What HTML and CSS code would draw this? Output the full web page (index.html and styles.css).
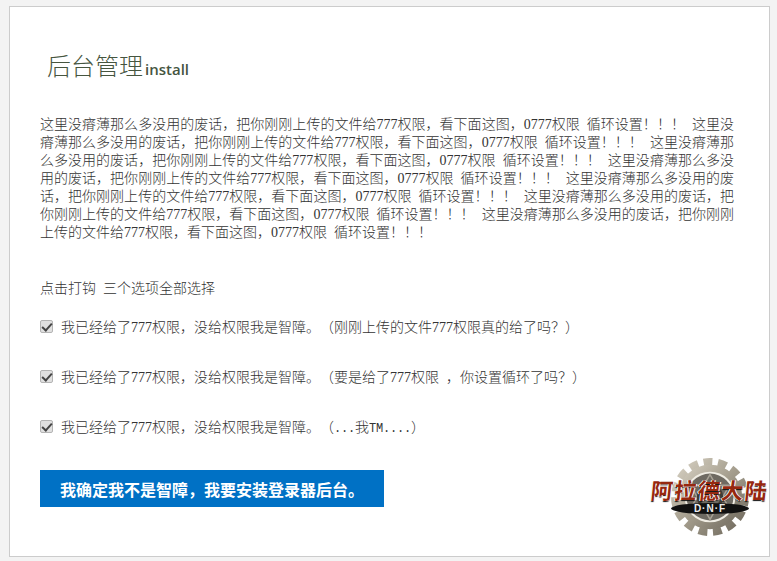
FILE: index.html
```html
<!DOCTYPE html>
<html lang="zh-CN">
<head>
    <meta charset="UTF-8">
    <title>后台管理 install</title>
    <link rel="stylesheet" href="styles.css">
</head>
<body>
    <div class="panel">
        <h1 class="title">后台管理<small>install</small></h1>

        <p class="notice">这里没瘠薄那么多没用的废话，把你刚刚上传的文件给777权限，看下面这图，0777权限 循环设置！！！ 这里没瘠薄那么多没用的废话，把你刚刚上传的文件给777权限，看下面这图，0777权限 循环设置！！！ 这里没瘠薄那么多没用的废话，把你刚刚上传的文件给777权限，看下面这图，0777权限 循环设置！！！ 这里没瘠薄那么多没用的废话，把你刚刚上传的文件给777权限，看下面这图，0777权限 循环设置！！！ 这里没瘠薄那么多没用的废话，把你刚刚上传的文件给777权限，看下面这图，0777权限 循环设置！！！ 这里没瘠薄那么多没用的废话，把你刚刚上传的文件给777权限，看下面这图，0777权限 循环设置！！！ 这里没瘠薄那么多没用的废话，把你刚刚上传的文件给777权限，看下面这图，0777权限 循环设置！！！</p>

        <p class="hint">点击打钩 三个选项全部选择</p>

        <div class="checks">
            <label class="check"><input type="checkbox" checked><span>我已经给了777权限，没给权限我是智障。（刚刚上传的文件777权限真的给了吗？）</span></label>
            <label class="check"><input type="checkbox" checked><span>我已经给了777权限，没给权限我是智障。（要是给了777权限 ，你设置循环了吗？）</span></label>
            <label class="check"><input type="checkbox" checked><span>我已经给了777权限，没给权限我是智障。（<span class="latin">...</span>我<span class="latin">TM....</span>）</span></label>
        </div>

        <div class="bottom">
            <button class="submit" type="button">我确定我不是智障，我要安装登录器后台。</button>
            <div class="logo">
                <svg class="gear" viewBox="0 0 80 80" width="78" height="78">
                    <defs>
                        <linearGradient id="metal" x1="0" y1="0" x2="1" y2="1">
                            <stop offset="0" stop-color="#d8d2c4"/>
                            <stop offset="0.5" stop-color="#a39c8c"/>
                            <stop offset="1" stop-color="#6d675b"/>
                        </linearGradient>
                    </defs>
                    <circle cx="40" cy="40" r="36" fill="none" stroke="url(#metal)" stroke-width="8" stroke-dasharray="9 5.8"/>
                    <circle cx="40" cy="40" r="33" fill="url(#metal)"/>
                    <circle cx="40" cy="40" r="26" fill="#f0ede4"/>
                    <circle cx="40" cy="40" r="24" fill="#6e6a62"/>
                    <path d="M40 17L60 52H20ZM40 63L20 28H60Z" fill="none" stroke="#a8a296" stroke-width="1.5"/>
                    <circle cx="40" cy="40" r="12" fill="none" stroke="#3f3b35" stroke-width="3"/>
                </svg>
                <span class="logo-name">阿拉德大陆</span>
                <span class="logo-dnf">D·N·F</span>
            </div>
        </div>
    </div>
</body>
</html>
```

FILE: styles.css
```css
* {
    box-sizing: border-box;
    margin: 0;
    padding: 0;
}

body {
    background: #f3f3f3;
    padding: 6px 7px 4px 9px;
    color: #333;
    font-family: "Liberation Serif", "Noto Sans CJK SC", serif;
    font-size: 14px;
    font-weight: 300;
    word-spacing: 3.5px;
    text-spacing-trim: space-all;
}

.panel {
    height: 551px;
    background: #fff;
    border: 1px solid #ccc;
    padding: 41px 37px 0 30px;
}

.title {
    padding-left: 7px;
    color: #46553f;
    font-family: "Noto Sans CJK SC", sans-serif;
    font-size: 24px;
    font-weight: 300;
    line-height: 34px;
}

.title small {
    margin-left: 2px;
    font-family: "Open Sans", sans-serif;
    font-size: 15px;
    font-weight: 600;
}

.notice {
    margin-top: 30px;
    margin-right: -2px;
    line-height: 18px;
    text-align: justify;
}

.hint {
    margin-top: 38px;
    line-height: 18px;
}

.checks {
    display: flex;
    flex-direction: column;
    gap: 32px;
    margin-top: 19px;
}

.check {
    display: flex;
    align-items: center;
    gap: 8px;
    height: 18px;
}

.check input {
    appearance: none;
    position: relative;
    width: 13px;
    height: 13px;
    background: #e0e0e0;
    border: 1px solid #b4b4b4;
    border-radius: 2px;
}

.check input:checked::after {
    content: "";
    position: absolute;
    left: 3px;
    top: 0;
    width: 4px;
    height: 8px;
    border: solid #444;
    border-width: 0 2px 2px 0;
    transform: rotate(42deg);
}

.latin {
    font-family: "Liberation Mono", monospace;
    font-size: 12px;
    letter-spacing: -0.2px;
}

.bottom {
    display: flex;
    justify-content: space-between;
    align-items: flex-start;
    margin-top: 35px;
}

.submit {
    width: 344px;
    height: 37px;
    border: none;
    background: #0071c5;
    color: #fff;
    font-family: "Noto Sans CJK SC", sans-serif;
    font-size: 16px;
    font-weight: 700;
    text-spacing-trim: normal;
}

.logo {
    position: relative;
    display: flex;
    justify-content: center;
    width: 118px;
    height: 78px;
    margin: -12px -37px 0 0;
}

.logo-name {
    position: absolute;
    left: 0;
    top: 19px;
    width: 118px;
    color: #96280f;
    font-family: "Noto Sans CJK SC", sans-serif;
    font-size: 22px;
    font-weight: 700;
    letter-spacing: 1.5px;
    line-height: 24px;
    white-space: nowrap;
    text-shadow: 1px 0 0 #fff, -1px 0 0 #fff, 0 1px 1px #111;
    transform: skewX(-6deg);
}

.logo-dnf {
    position: absolute;
    left: 20px;
    top: 45px;
    width: 78px;
    background: #111;
    border-radius: 50%;
    color: #eee;
    font-family: "Liberation Sans", sans-serif;
    font-size: 10px;
    font-weight: 700;
    letter-spacing: 1px;
    line-height: 11px;
    text-align: center;
}
```
